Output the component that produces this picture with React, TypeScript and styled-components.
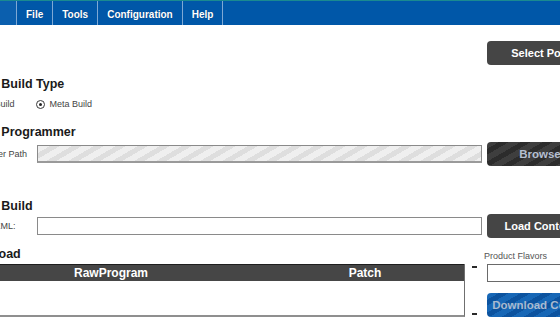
import styled, { createGlobalStyle, css } from "styled-components";

const GlobalStyle = createGlobalStyle`
html, body {
    margin: 0;
    padding: 0;
    background: #ffffff;
    overflow: hidden;
}
body {
    font-family: "Liberation Sans", Arial, sans-serif;
}
`;

const Window = styled.div`
height: 323px;
overflow: hidden;
width: 560px;
`;

const MenuBar = styled.nav`
background: #0057a8;
border-top: 1px solid #1a8a90;
display: flex;
height: 24px;
`;

const LeadTab = styled.div`
background: #0b5fae;
width: 16px;
`;

const MenuItem = styled.div<{ $last?: boolean }>`
border-left: 1px solid #7ea8d4;
${p => p.$last && css`border-right: 1px solid #7ea8d4;`}
color: #ffffff;
font-size: 10px;
font-weight: bold;
line-height: 20px;
padding: 4px 9px 0;
text-shadow: 0 0 1px rgba(0, 0, 0, 0.35);
`;

const Content = styled.main`
display: flex;
flex-direction: column;
margin-left: -44px;
width: 700px;
`;

const TopActions = styled.div`
margin-top: 16px;
padding-left: 531px;
`;

type ButtonKind = "dark" | "striped" | "blue";

const ActionButton = styled.button<{ $kind?: ButtonKind }>`
border: 0;
border-radius: 4px;
color: #ffffff;
cursor: pointer;
display: block;
flex-shrink: 0;
font-family: "Liberation Sans", Arial, sans-serif;
font-size: 11px;
font-weight: bold;
height: 24px;
padding: 0;
text-align: center;
width: 106px;
background: #454545;
${p => p.$kind === "striped" && css`
    background: repeating-linear-gradient(150deg, #3e3e3e 0 6px, #2c2c2c 6px 11px);
    color: #b5bfd0;
    font-size: 11.5px;
`}
${p => p.$kind === "blue" && css`
    background: repeating-linear-gradient(150deg, #1767b6 0 6px, #0c539f 6px 11px);
    color: #a9bacf;
    font-size: 11.5px;
    width: 112px;
`}
`;

const Heading = styled.h2<{ $gap: number }>`
color: #1a1a1a;
font-size: 12.5px;
font-weight: bold;
line-height: 15px;
margin: ${p => p.$gap}px 0 0 5px;
white-space: nowrap;
`;

const RadioRow = styled.div`
align-items: center;
color: #444444;
display: flex;
font-size: 9px;
gap: 21px;
height: 12px;
margin-top: 6px;
padding-left: 7px;
`;

const RadioOption = styled.label`
align-items: center;
display: flex;
gap: 5px;
white-space: nowrap;
`;

const RadioDot = styled.span<{ $checked?: boolean }>`
border: 1px solid #3a3a3a;
border-radius: 50%;
box-sizing: border-box;
display: inline-block;
height: 9px;
position: relative;
width: 9px;
${p => p.$checked && css`
    &::after {
        background: #222222;
        border-radius: 50%;
        content: "";
        height: 3px;
        left: 2px;
        position: absolute;
        top: 2px;
        width: 3px;
    }
`}
`;

const FieldRow = styled.div<{ $gap: number }>`
align-items: center;
display: flex;
gap: 5px;
height: 24px;
margin-top: ${p => p.$gap}px;
`;

const FieldLabel = styled.span`
color: #444444;
flex-shrink: 0;
font-size: 9px;
margin-right: -5px;
white-space: nowrap;
width: 81px;
`;

const TextBox = styled.div<{ $disabled?: boolean }>`
background: #ffffff;
border: 1px solid #8a8a8a;
box-sizing: border-box;
flex-shrink: 0;
height: 18px;
width: 445px;
${p => p.$disabled && css`
    background: repeating-linear-gradient(150deg, #efefef 0 6px, #dedede 6px 11px);
    border-bottom: 2px solid #9a9a9a;
`}
`;

const DownloadArea = styled.section`
display: flex;
margin-top: 9px;
`;

const TableColumn = styled.div`
display: flex;
flex-direction: column;
width: 509px;
`;

const ImageTable = styled.div`
border-bottom: 2px solid #8f8f8f;
border-right: 1px solid #6f6f6f;
display: flex;
flex-direction: column;
height: 51px;
margin-top: 2px;
`;

const TableHead = styled.div`
background: #464646;
border-top: 1px solid #1e1e1e;
display: grid;
grid-template-columns: 310px 1fr;
height: 16px;
`;

const HeadCell = styled.div`
color: #ffffff;
font-size: 12px;
font-weight: bold;
line-height: 16px;
text-align: center;
`;

const TableBody = styled.div`
background: #ffffff;
flex: 1;
`;

const DashColumn = styled.div`
display: flex;
flex-direction: column;
height: 49px;
justify-content: space-between;
margin-top: 19px;
padding-left: 7px;
width: 15px;
`;

const Dash = styled.span`
background: #2a2a2a;
display: block;
height: 2px;
width: 5px;
`;

const FlavorColumn = styled.div`
display: flex;
flex-direction: column;
`;

const SmallLabel = styled.span`
color: #555555;
font-size: 9px;
line-height: 12px;
margin: 3px 0 0 -3px;
white-space: nowrap;
`;

const FlavorInput = styled.div`
border: 1px solid #6a6a6a;
box-sizing: border-box;
height: 18px;
margin: 2px 0 11px;
width: 120px;
`;

export default function App() {
    const menu = ["File", "Tools", "Configuration", "Help"];

    return (
        <Window>
            <GlobalStyle />
            <MenuBar>
                <LeadTab />
                {menu.map((item, i) => (
                    <MenuItem key={item} $last={i === menu.length - 1}>{item}</MenuItem>
                ))}
            </MenuBar>
            <Content>
                <TopActions>
                    <ActionButton>Select Port</ActionButton>
                </TopActions>

                <Heading $gap={12}>Select Build Type</Heading>
                <RadioRow>
                    <RadioOption><RadioDot />Flat Build</RadioOption>
                    <RadioOption><RadioDot $checked />Meta Build</RadioOption>
                </RadioRow>

                <Heading $gap={15}>Select Programmer</Heading>
                <FieldRow $gap={2}>
                    <FieldLabel>Programmer Path</FieldLabel>
                    <TextBox $disabled />
                    <ActionButton $kind="striped">Browse</ActionButton>
                </FieldRow>

                <Heading $gap={33}>Select Build</Heading>
                <FieldRow $gap={0}>
                    <FieldLabel>Contents XML:</FieldLabel>
                    <TextBox />
                    <ActionButton>Load Content</ActionButton>
                </FieldRow>

                <DownloadArea>
                    <TableColumn>
                        <Heading $gap={0}>Download</Heading>
                        <ImageTable>
                            <TableHead>
                                <HeadCell>RawProgram</HeadCell>
                                <HeadCell>Patch</HeadCell>
                            </TableHead>
                            <TableBody />
                        </ImageTable>
                    </TableColumn>
                    <DashColumn>
                        <Dash />
                        <Dash />
                    </DashColumn>
                    <FlavorColumn>
                        <SmallLabel>Product Flavors</SmallLabel>
                        <FlavorInput />
                        <ActionButton $kind="blue">Download Content</ActionButton>
                    </FlavorColumn>
                </DownloadArea>
            </Content>
        </Window>
    );
}
